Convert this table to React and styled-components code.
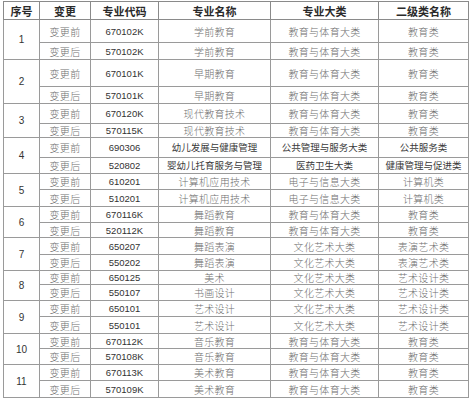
import React from 'react';
import styled, { createGlobalStyle } from 'styled-components';

const GlobalStyle = createGlobalStyle`
  html, body {
    margin: 0;
    padding: 0;
    background: #ffffff;
  }
`;

const groups = [
  { h: [23, 17], rows: [
    ['670102K', '学前教育', '教育与体育大类', '教育类'],
    ['570102K', '学前教育', '教育与体育大类', '教育类'],
  ] },
  { h: [27, 17], rows: [
    ['670101K', '早期教育', '教育与体育大类', '教育类'],
    ['570101K', '早期教育', '教育与体育大类', '教育类'],
  ] },
  { h: [20, 14], rows: [
    ['670120K', '现代教育技术', '教育与体育大类', '教育类'],
    ['570115K', '现代教育技术', '教育与体育大类', '教育类'],
  ] },
  { h: [20, 16], plain: true, rows: [
    ['690306', '幼儿发展与健康管理', '公共管理与服务大类', '公共服务类'],
    ['520802', '婴幼儿托育服务与管理', '医药卫生大类', '健康管理与促进类'],
  ] },
  { h: [16, 17], rows: [
    ['610201', '计算机应用技术', '电子与信息大类', '计算机类'],
    ['510201', '计算机应用技术', '电子与信息大类', '计算机类'],
  ] },
  { h: [16, 15], rows: [
    ['670116K', '舞蹈教育', '教育与体育大类', '教育类'],
    ['520112K', '舞蹈教育', '教育与体育大类', '教育类'],
  ] },
  { h: [17, 16], rows: [
    ['650207', '舞蹈表演', '文化艺术大类', '表演艺术类'],
    ['550202', '舞蹈表演', '文化艺术大类', '表演艺术类'],
  ] },
  { h: [14, 16], rows: [
    ['650125', '美术', '文化艺术大类', '艺术设计类'],
    ['550107', '书画设计', '文化艺术大类', '艺术设计类'],
  ] },
  { h: [16, 17], rows: [
    ['650101', '艺术设计', '文化艺术大类', '艺术设计类'],
    ['550101', '艺术设计', '文化艺术大类', '艺术设计类'],
  ] },
  { h: [15, 16], rows: [
    ['670112K', '音乐教育', '教育与体育大类', '教育类'],
    ['570108K', '音乐教育', '教育与体育大类', '教育类'],
  ] },
  { h: [16, 17], rows: [
    ['670113K', '美术教育', '教育与体育大类', '教育类'],
    ['570109K', '美术教育', '教育与体育大类', '教育类'],
  ] },
];

const widths = [36, 51, 68, 112, 108, 90];
const headers = ['序号', '变更', '专业代码', '专业名称', '专业大类', '二级类名称'];

const App = () => {
  return (
    <>
      <GlobalStyle />
      <Page>
        <Table>
          <colgroup>
            {widths.map((w, i) => (
              <col key={i} style={{ width: w }} />
            ))}
          </colgroup>
          <thead>
            <HeadRow>
              {headers.map((t) => (
                <HeadCell key={t}>{t}</HeadCell>
              ))}
            </HeadRow>
          </thead>
          <tbody>
            {groups.map((g, gi) =>
              g.rows.map((r, ri) => (
                <BodyRow key={`${gi}-${ri}`} $h={g.h[ri]}>
                  {ri === 0 && <IndexCell rowSpan={2}>{gi + 1}</IndexCell>}
                  <TextCell>{ri === 0 ? '变更前' : '变更后'}</TextCell>
                  <CodeCell>{r[0]}</CodeCell>
                  <TextCell $plain={g.plain}>{r[1]}</TextCell>
                  <TextCell $plain={g.plain}>{r[2]}</TextCell>
                  <TextCell $plain={g.plain}>{r[3]}</TextCell>
                </BodyRow>
              ))
            )}
          </tbody>
        </Table>
      </Page>
    </>
  );
};

const Page = styled.div`
  padding: 1px 3px 0;
  width: 471px;
  box-sizing: border-box;
`;

const Table = styled.table`
  border-collapse: collapse;
  table-layout: fixed;
  width: 465px;
  border: 1px solid #6e6e6e;
`;

const HeadRow = styled.tr`
  height: 18px;
`;

const HeadCell = styled.th`
  padding: 0;
  border: 1px solid #8a8a8a;
  font-family: 'Noto Sans CJK SC', sans-serif;
  font-size: 11px;
  font-weight: 700;
  color: #2a2a2a;
  line-height: 12px;
  text-align: center;
  vertical-align: middle;
`;

const BodyRow = styled.tr`
  height: ${({ $h }) => $h}px;
`;

const Cell = styled.td`
  padding: 0;
  border: 1px solid #9a9a9a;
  text-align: center;
  vertical-align: middle;
  line-height: 11px;
  white-space: nowrap;
  overflow: hidden;
`;

const IndexCell = styled(Cell)`
  font-family: 'Liberation Sans', Arial, sans-serif;
  font-size: 10px;
  color: #333;
`;

const CodeCell = styled(Cell)`
  font-family: 'Liberation Sans', Arial, sans-serif;
  font-size: 9.5px;
  color: #333;
`;

const TextCell = styled(Cell)`
  font-family: 'Noto Sans CJK SC', sans-serif;
  font-size: ${({ $plain }) => ($plain ? '9.5px' : '10px')};
  font-weight: ${({ $plain }) => ($plain ? 400 : 300)};
  color: ${({ $plain }) => ($plain ? '#3a3a3a' : '#6f6f6f')};
  letter-spacing: ${({ $plain }) => ($plain ? '0' : '0.3px')};
`;

export default App;
